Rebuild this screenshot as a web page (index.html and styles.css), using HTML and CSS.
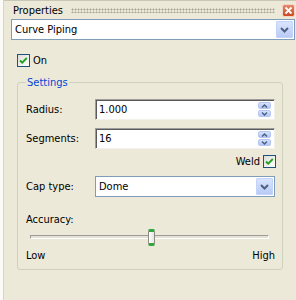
FILE: index.html
```html
<!DOCTYPE html>
<html lang="en">
<head>
    <meta charset="UTF-8">
    <title>Properties</title>
    <link rel="stylesheet" href="styles.css">
</head>
<body>
    <div class="dock">
        <div class="panel">

            <!-- Title bar -->
            <div class="titlebar">
                <span class="title">Properties</span>
                <span class="grip"></span>
                <span class="close">
                    <svg width="13" height="13" viewBox="0 0 13 13">
                        <defs>
                            <linearGradient id="closeFill" x1="0" y1="0" x2="0" y2="1">
                                <stop offset="0" stop-color="#e98a6c"/>
                                <stop offset="1" stop-color="#c8461f"/>
                            </linearGradient>
                        </defs>
                        <rect x="0.5" y="0.5" width="12" height="12" rx="2" fill="url(#closeFill)" stroke="#f4d6cb"/>
                        <path d="M3.5 3.5 L9.5 9.5 M9.5 3.5 L3.5 9.5" stroke="#ffffff" stroke-width="1.8"/>
                    </svg>
                </span>
            </div>

            <!-- Object selector -->
            <div class="combo object-select">
                <span class="combo-text">Curve Piping</span>
                <span class="combo-btn">
                    <svg width="17" height="17" viewBox="0 0 17 17">
                        <polyline points="5,7 8.5,10.5 12,7" fill="none" stroke="#4d6185" stroke-width="2"/>
                    </svg>
                </span>
            </div>

            <label class="check on-check">
                <span class="box">
                    <svg width="13" height="13" viewBox="0 0 13 13">
                        <polyline points="3,6.5 5.2,8.7 9.8,4" fill="none" stroke="#21a121" stroke-width="1.8"/>
                    </svg>
                </span>
                On
            </label>

            <!-- Settings group -->
            <fieldset class="group">
                <legend>Settings</legend>

                <div class="field">
                    <span class="lbl">Radius:</span>
                    <div class="spin">
                        <span class="spin-text">1.000</span>
                        <span class="spin-btns">
                            <span class="spin-up">
                                <svg width="11" height="6" viewBox="0 0 11 6"><polyline points="3,4.5 5.5,2 8,4.5" fill="none" stroke="#4d6185" stroke-width="1.5"/></svg>
                            </span>
                            <span class="spin-down">
                                <svg width="11" height="6" viewBox="0 0 11 6"><polyline points="3,1.5 5.5,4 8,1.5" fill="none" stroke="#4d6185" stroke-width="1.5"/></svg>
                            </span>
                        </span>
                    </div>
                </div>

                <div class="field field-next">
                    <span class="lbl">Segments:</span>
                    <div class="spin">
                        <span class="spin-text">16</span>
                        <span class="spin-btns">
                            <span class="spin-up">
                                <svg width="11" height="6" viewBox="0 0 11 6"><polyline points="3,4.5 5.5,2 8,4.5" fill="none" stroke="#4d6185" stroke-width="1.5"/></svg>
                            </span>
                            <span class="spin-down">
                                <svg width="11" height="6" viewBox="0 0 11 6"><polyline points="3,1.5 5.5,4 8,1.5" fill="none" stroke="#4d6185" stroke-width="1.5"/></svg>
                            </span>
                        </span>
                    </div>
                </div>

                <label class="check weld-check">
                    Weld
                    <span class="box">
                        <svg width="13" height="13" viewBox="0 0 13 13">
                            <polyline points="3,6.5 5.2,8.7 9.8,4" fill="none" stroke="#21a121" stroke-width="1.8"/>
                        </svg>
                    </span>
                </label>

                <div class="field cap-field">
                    <span class="lbl">Cap type:</span>
                    <div class="combo">
                        <span class="combo-text">Dome</span>
                        <span class="combo-btn">
                            <svg width="17" height="17" viewBox="0 0 17 17">
                                <polyline points="5,7 8.5,10.5 12,7" fill="none" stroke="#4d6185" stroke-width="2"/>
                            </svg>
                        </span>
                    </div>
                </div>

                <div class="accuracy-lbl">Accuracy:</div>
                <div class="slider">
                    <span class="track"></span>
                    <span class="thumb"></span>
                </div>
                <div class="ticks">
                    <span>Low</span>
                    <span>High</span>
                </div>
            </fieldset>

        </div>
    </div>
</body>
</html>
```

FILE: styles.css
```css
body {
    margin: 0;
    background-color: #ece9d8;
    font-family: "DejaVu Sans Condensed", "Liberation Sans", sans-serif;
    font-size: 11px;
    line-height: 13px;
    color: #000000;
}

/* Docked panel frame */
.dock {
    width: 296px;
    height: 300px;
    border-left: 3px solid #fbfaf6;
    box-sizing: border-box;
}

.panel {
    height: 100%;
    border-left: 1px solid #d8d5c6;
    border-top: 1px solid #c9c6b6;
    box-sizing: border-box;
    display: flex;
    flex-direction: column;
}

/* Title bar */
.titlebar {
    height: 18px;
    display: flex;
    align-items: center;
    padding: 0 1px 0 9px;
}

.grip {
    flex: 1;
    height: 5px;
    margin: 0 7px 0 8px;
    background-image: radial-gradient(circle, #a5a293 0.9px, transparent 1.1px);
    background-size: 3px 3px;
}

.close {
    display: flex;
    width: 13px;
    height: 13px;
}

/* Combo box */
.combo {
    height: 21px;
    border: 1px solid #7f9db9;
    background-color: #ffffff;
    display: flex;
    align-items: center;
    padding: 1px;
    box-sizing: border-box;
}

.object-select {
    margin: 0 1px 0 7px;
}

.combo-text {
    flex: 1;
    padding-left: 2px;
}

.combo-btn {
    display: flex;
    width: 17px;
    height: 17px;
    border-radius: 2px;
    background: linear-gradient(#dbe6fd, #b6c9f5);
    box-shadow: inset 0 0 0 1px #c3d3fb;
}

/* Check boxes */
.check {
    display: flex;
    align-items: center;
    gap: 3px;
}

.check .box {
    display: flex;
    width: 11px;
    height: 11px;
    border: 1px solid #1c5180;
    background: linear-gradient(135deg, #dcdcd7, #ffffff);
}

.check .box svg {
    margin: -1px;
}

.on-check {
    margin: 14px 0 0 13px;
}

.weld-check {
    justify-content: flex-end;
    margin: 6px -1px 0 0;
}

/* Group box */
.group {
    margin: 9px 13px 0 13px;
    padding: 10px 7px 7px 8px;
    border: 1px solid #d0d0bf;
    border-radius: 3px;
    min-width: 0;
}

.group legend {
    padding: 0 1px;
    color: #0046d5;
}

.field {
    display: flex;
    align-items: center;
    height: 21px;
}

.field-next {
    margin-top: 8px;
}

.cap-field {
    margin-top: 8px;
}

.lbl {
    width: 69px;
}

.field .combo {
    flex: 1;
}

/* Spin edit */
.spin {
    flex: 1;
    height: 21px;
    display: flex;
    align-items: center;
    padding: 2px;
    box-sizing: border-box;
    background-color: #ffffff;
    border: 1px solid;
    border-color: #9d9d9d #f2f1ea #f2f1ea #9d9d9d;
    box-shadow: inset 1px 1px 0 #5a5a5a;
}

.spin-text {
    flex: 1;
    padding-left: 1px;
}

.spin-btns {
    display: flex;
    flex-direction: column;
    gap: 1px;
    margin-right: 1px;
}

.spin-up,
.spin-down {
    display: flex;
    align-items: center;
    justify-content: center;
    width: 11px;
    height: 5px;
    border: 1px solid #b4c6f1;
    border-radius: 2px;
    background: linear-gradient(#d6e2fc, #b3c6f4);
}

/* Accuracy slider */
.accuracy-lbl {
    margin-top: 16px;
}

.slider {
    position: relative;
    height: 17px;
    margin: 3px 6px 0 4px;
}

.track {
    position: absolute;
    left: 0;
    right: 0;
    top: 6px;
    height: 2px;
    border-top: 1px solid #9d9c99;
    border-left: 1px solid #9d9c99;
    border-bottom: 1px solid #ffffff;
    border-right: 1px solid #ffffff;
    background-color: #e3e1d6;
    border-radius: 1px;
}

.thumb {
    position: absolute;
    top: 0;
    left: calc(50% - 2px);
    width: 5px;
    height: 11px;
    border: 1px solid #8c8c85;
    border-top: 3px solid #2ca93c;
    border-bottom: 3px solid #2ca93c;
    border-radius: 2px;
    background: linear-gradient(90deg, #ffffff, #e6e5dd);
}

.ticks {
    display: flex;
    justify-content: space-between;
    margin-top: 3px;
}
```
